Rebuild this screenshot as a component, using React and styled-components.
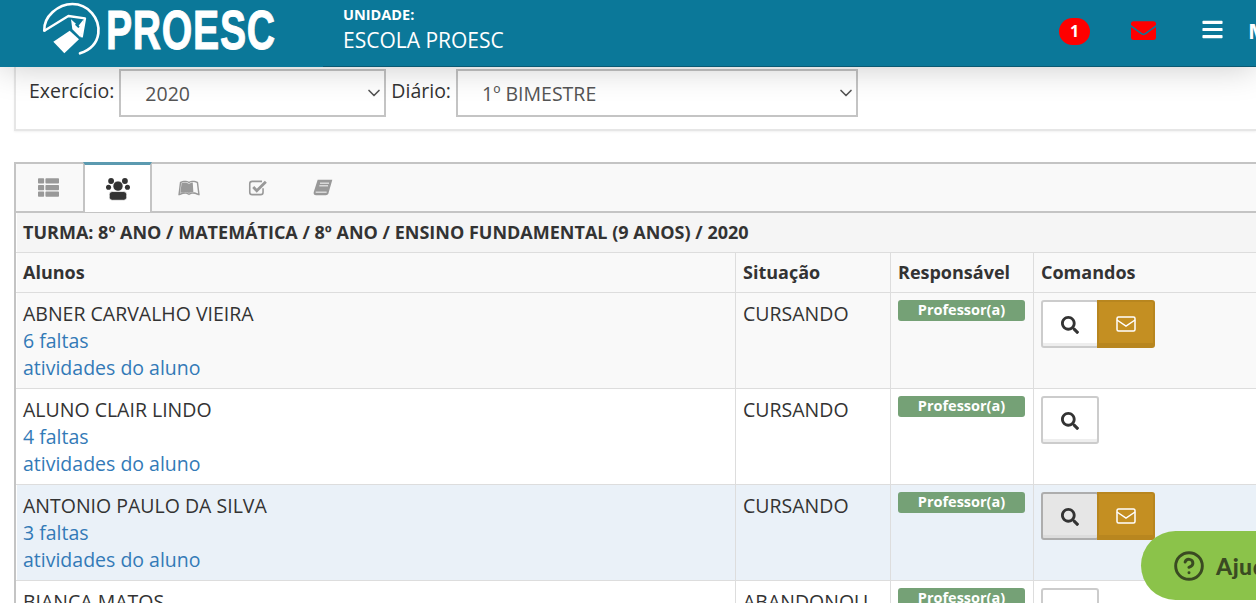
import { createGlobalStyle } from "styled-components";
import styled from "styled-components";
import {
  FaThList,
  FaLeanpub,
  FaSearch,
  FaEnvelope,
  FaBars,
} from "react-icons/fa";
import { ChevronDown, CircleHelp } from "lucide-react";

const GlobalStyle = createGlobalStyle`
  html, body {
    margin: 0;
    width: 1256px;
    height: 603px;
    overflow: hidden;
    background: #fff;
    font-family: "Open Sans", sans-serif;
    color: #333;
  }
  * { box-sizing: border-box; }
`;

const Page = styled.div`
  width: 1256px;
  height: 603px;
  overflow: hidden;
  position: relative;
`;

const Header = styled.header`
  position: relative;
  z-index: 2;
  height: 67px;
  display: flex;
  align-items: flex-start;
  box-shadow: 0 0 34px rgba(0, 0, 0, 0.22);
  color: #fff;
`;

const Brand = styled.div`
  flex: none;
  width: 323px;
  height: 67px;
  padding: 0 0 0 35px;
  display: flex;
  align-items: flex-start;
  gap: 1px;
  background: #0b7899;
  overflow: hidden;
  svg {
    flex: none;
  }
`;

const BrandName = styled.span`
  flex: none;
  display: inline-block;
  font-family: "Liberation Sans", sans-serif;
  font-weight: 700;
  font-size: 56px;
  line-height: 60px;
  letter-spacing: 1px;
  -webkit-text-stroke: 1px #fff;
  transform: scaleX(0.7);
  transform-origin: left center;
`;

const HeaderMain = styled.div`
  flex: 1;
  height: 67px;
  display: flex;
  align-items: flex-start;
  padding-left: 20px;
  background: #0b7899;
  border-bottom: 1px solid #0a5a73;
`;

const Unit = styled.div`
  padding-top: 6px;
  flex: 1;
`;

const UnitLabel = styled.div`
  font-size: 14.5px;
  font-weight: 700;
  line-height: 18px;
`;

const UnitName = styled.div`
  font-size: 21px;
  line-height: 27px;
  margin-top: 3px;
`;

const HeaderTools = styled.div`
  width: 197px;
  flex: none;
  padding-top: 18px;
  display: flex;
  align-items: flex-start;
  overflow: hidden;
`;

const Badge = styled.span`
  width: 31px;
  height: 27px;
  border-radius: 14px;
  background: #ff0000;
  font-size: 16px;
  font-weight: 700;
  line-height: 27px;
  text-align: center;
  margin-right: 41px;
  flex: none;
`;

const MailIcon = styled(FaEnvelope)`
  width: 25px;
  height: 25px;
  color: #ff0000;
  margin-right: 45px;
  flex: none;
`;

const BarsIcon = styled(FaBars)`
  width: 23px;
  height: 23px;
  margin-right: 24px;
  flex: none;
`;

const MenuText = styled.span`
  font-size: 22px;
  font-weight: 700;
  line-height: 24px;
`;

const Content = styled.main`
  padding: 0 0 0 15px;
`;

const FilterPanel = styled.div`
  height: 64px;
  padding: 2px 0 0 11px;
  display: flex;
  align-items: flex-start;
  border-left: 2px solid #e6e6e6;
  border-bottom: 2px solid #e6e6e6;
  margin-left: -1px;
  box-shadow: 0 1px 2px rgba(0, 0, 0, 0.06);
`;

const FilterLabel = styled.label`
  font-size: 19.5px;
  line-height: 44px;
  margin: 0 ${(props) => props.$gap}px 0 2px;
`;

const SelectWrap = styled.div`
  position: relative;
  width: ${(props) => props.$width}px;
  height: 48px;
  margin-right: 3px;
`;

const FilterSelect = styled.select`
  appearance: none;
  width: 100%;
  height: 48px;
  border: 2px solid #c4c4c4;
  background: #fff;
  font-family: "Open Sans", sans-serif;
  font-size: 19.5px;
  color: #555;
  padding: 0 20px 0 24px;
  border-radius: 0;
`;

const SelectArrow = styled(ChevronDown)`
  position: absolute;
  right: 2px;
  top: 14px;
  width: 20px;
  height: 20px;
  color: #555;
  pointer-events: none;
`;

const TabPanel = styled.section`
  margin-top: 31px;
  width: 1400px;
  border: 2px solid #c4c4c4;
  border-right: 0;
  border-bottom: 0;
  margin-left: -1px;
`;

const TabBar = styled.div`
  height: 49px;
  display: flex;
  background: #f9f9f9;
  border-bottom: 2px solid #c4c4c4;
`;

const Tab = styled.div`
  width: ${(props) => props.$width}px;
  height: ${(props) => (props.$active ? "50px" : "47px")};
  padding-right: ${(props) => props.$inset || 0}px;
  display: flex;
  align-items: center;
  justify-content: center;
  font-size: 20px;
  color: ${(props) => (props.$active ? "#333" : "#999")};
  background: ${(props) => (props.$active ? "#fff" : "transparent")};
  border-top: ${(props) => (props.$active ? "3px solid #5b9ab0" : "0")};
  border-left: ${(props) => (props.$active ? "2px solid #c4c4c4" : "0")};
  border-right: ${(props) => (props.$active ? "2px solid #c4c4c4" : "0")};
  margin-top: ${(props) => (props.$active ? "-2px" : "0")};
  position: relative;
  z-index: 1;
`;

const Table = styled.table`
  border-collapse: collapse;
  table-layout: fixed;
  width: 1400px;
  font-size: 19.5px;
`;

const ClassRow = styled.tr`
  background: #f5f5f5;
`;

const ClassCell = styled.th`
  height: 39px;
  padding: 0 6px;
  text-align: left;
  font-size: 18px;
  font-weight: 700;
  border-bottom: 1px solid #ddd;
  border-left: 1px solid transparent;
`;

const HeadRow = styled.tr`
  background: #f9f9f9;
`;

const HeadCell = styled.th`
  height: 40px;
  padding: 0 7px;
  text-align: left;
  font-size: 18px;
  font-weight: 700;
  border-bottom: 1px solid #ddd;
  border-left: 1px solid #ddd;
  &:first-child {
    padding-left: 6px;
    border-left-color: transparent;
  }
`;

const Row = styled.tr`
  height: 96px;
  background: ${(props) => props.$bg};
`;

const Cell = styled.td`
  padding: 7px;
  vertical-align: top;
  line-height: 27px;
  border-bottom: 1px solid #ddd;
  border-left: 1px solid #ddd;
  &:first-child {
    padding-left: 6px;
    border-left-color: transparent;
  }
`;

const StudentLink = styled.div`
  color: #337ab7;
`;

const RoleTag = styled.span`
  display: block;
  width: 127px;
  height: 21px;
  border-radius: 3px;
  background: #75a176;
  color: #fff;
  font-size: 14.5px;
  font-weight: 700;
  line-height: 20px;
  text-align: center;
`;

const Commands = styled.div`
  display: flex;
`;

const SearchButton = styled.span`
  width: 58px;
  height: 48px;
  padding-top: 2px;
  display: flex;
  align-items: center;
  justify-content: center;
  font-size: 18px;
  color: #333;
  background: ${(props) => (props.$hover ? "#e6e6e6" : "#fff")};
  border: 2px solid ${(props) => (props.$hover ? "#adadad" : "#ccc")};
  border-radius: 3px;
  box-shadow: inset 0 -3px 0 ${(props) => (props.$hover ? "#dcdcdc" : "#eee")};
`;

const MailButton = styled.span`
  width: 58px;
  height: 48px;
  margin-left: -2px;
  padding-top: 3px;
  display: flex;
  align-items: center;
  justify-content: center;
  color: #fff;
  background: #c48f22;
  border: 2px solid #b8861f;
  border-bottom-width: 5px;
  border-radius: 0 3px 3px 0;
`;

const HelpButton = styled.div`
  position: absolute;
  left: 1141px;
  top: 531px;
  width: 180px;
  height: 69px;
  border-radius: 35px;
  background: #8bc34a;
  color: #3a4a22;
  display: flex;
  align-items: center;
  gap: 11px;
  padding-left: 32px;
  z-index: 3;
  font-family: "Lato", sans-serif;
  font-size: 23px;
  font-weight: 900;
  letter-spacing: 0.5px;
`;

const students = [
  { name: "ABNER CARVALHO VIEIRA", faults: "6 faltas", status: "CURSANDO", bg: "#f9f9f9", mail: true },
  { name: "ALUNO CLAIR LINDO", faults: "4 faltas", status: "CURSANDO", bg: "#fff", mail: false },
  { name: "ANTONIO PAULO DA SILVA", faults: "3 faltas", status: "CURSANDO", bg: "#eaf1f8", mail: true, hover: true },
  { name: "BIANCA MATOS", faults: "2 faltas", status: "ABANDONOU", bg: "#fff", mail: false },
];

function Logo() {
  return (
    <svg width="70" height="62" viewBox="0 0 210 186" fill="none">
      <path
        d="M28 92C25 50 70 12 112 12c48 0 83 43 78 88-4 30-25 50-55 60"
        stroke="#fff"
        strokeWidth="8"
        strokeLinecap="round"
      />
      <path d="M28 92l72-44 50 7-10 57" stroke="#fff" strokeWidth="7" strokeLinejoin="round" />
      <path d="M55 125l49-33 28 26-44 42z" fill="#fff" />
      <path d="M108 58l22 20 16-20-2 32-8 22-24-24z" fill="#fff" />
      <path d="M122 72l10 10" stroke="#0b7899" strokeWidth="6" />
    </svg>
  );
}

function UsersIcon() {
  return (
    <svg width="24" height="24" viewBox="0 0 66 66" fill="#333">
      <circle cx="14" cy="11" r="8" />
      <circle cx="52" cy="11" r="8" />
      <circle cx="7" cy="28" r="7" />
      <circle cx="59" cy="28" r="7" />
      <circle cx="33" cy="25" r="14" stroke="#fff" strokeWidth="2" />
      <rect x="9" y="40" width="48" height="24" rx="8" stroke="#fff" strokeWidth="2" />
    </svg>
  );
}

function CheckIcon() {
  return (
    <svg width="21" height="18" viewBox="0 0 60 50" fill="none">
      <path
        d="M40 6H12a7 7 0 0 0-7 7v24a7 7 0 0 0 7 7h24a7 7 0 0 0 7-7V26"
        stroke="#999"
        strokeWidth="4.5"
      />
      <path d="M15 22l10 11 26-26" stroke="#999" strokeWidth="8" />
    </svg>
  );
}

function BookIcon() {
  return (
    <svg width="20" height="17" viewBox="0 0 60 50" fill="#999">
      <path d="M14 2h44L47 40q-1 8-9 8H9q-8 0-7-9z" />
      <path d="M21 12h27M19 20h26M8 39h33" stroke="#f9f9f9" strokeWidth="3" />
    </svg>
  );
}

function ButtonEnvelope() {
  return (
    <svg width="20" height="16" viewBox="0 0 20 16" fill="none" stroke="#fff" strokeWidth="1.5">
      <rect x="1" y="1" width="18" height="14" rx="1.5" />
      <path d="M1 4l9 6 9-6" />
    </svg>
  );
}

export default function App() {
  return (
    <Page>
      <GlobalStyle />
      <Header>
        <Brand>
          <Logo />
          <BrandName>PROESC</BrandName>
        </Brand>
        <HeaderMain>
          <Unit>
            <UnitLabel>UNIDADE:</UnitLabel>
            <UnitName>ESCOLA PROESC</UnitName>
          </Unit>
          <HeaderTools>
            <Badge>1</Badge>
            <MailIcon />
            <BarsIcon />
            <MenuText>MENU</MenuText>
          </HeaderTools>
        </HeaderMain>
      </Header>
      <Content>
        <FilterPanel>
          <FilterLabel $gap={5}>Exercício:</FilterLabel>
          <SelectWrap $width={267}>
            <FilterSelect>
              <option>2020</option>
            </FilterSelect>
            <SelectArrow />
          </SelectWrap>
          <FilterLabel $gap={5}>Diário:</FilterLabel>
          <SelectWrap $width={402}>
            <FilterSelect>
              <option>1º BIMESTRE</option>
            </FilterSelect>
            <SelectArrow />
          </SelectWrap>
        </FilterPanel>
        <TabPanel>
          <TabBar>
            <Tab $width={67} $inset={2}><FaThList size={21} /></Tab>
            <Tab $width={69} $active><UsersIcon /></Tab>
            <Tab $width={73}><FaLeanpub size={22} /></Tab>
            <Tab $width={66}><CheckIcon /></Tab>
            <Tab $width={64}><BookIcon /></Tab>
          </TabBar>
          <Table>
            <colgroup>
              <col style={{ width: 719 }} />
              <col style={{ width: 155 }} />
              <col style={{ width: 143 }} />
              <col />
            </colgroup>
            <thead>
              <ClassRow>
                <ClassCell colSpan={4}>
                  TURMA: 8º ANO / MATEMÁTICA / 8º ANO / ENSINO FUNDAMENTAL (9 ANOS) / 2020
                </ClassCell>
              </ClassRow>
              <HeadRow>
                <HeadCell>Alunos</HeadCell>
                <HeadCell>Situação</HeadCell>
                <HeadCell>Responsável</HeadCell>
                <HeadCell>Comandos</HeadCell>
              </HeadRow>
            </thead>
            <tbody>
              {students.map((student) => (
                <Row key={student.name} $bg={student.bg}>
                  <Cell>
                    {student.name}
                    <StudentLink>{student.faults}</StudentLink>
                    <StudentLink>atividades do aluno</StudentLink>
                  </Cell>
                  <Cell>{student.status}</Cell>
                  <Cell>
                    <RoleTag>Professor(a)</RoleTag>
                  </Cell>
                  <Cell>
                    <Commands>
                      <SearchButton $hover={student.hover}><FaSearch /></SearchButton>
                      {student.mail && <MailButton><ButtonEnvelope /></MailButton>}
                    </Commands>
                  </Cell>
                </Row>
              ))}
            </tbody>
          </Table>
        </TabPanel>
      </Content>
      <HelpButton>
        <CircleHelp size={32} strokeWidth={2.2} />
        Ajuda
      </HelpButton>
    </Page>
  );
}
